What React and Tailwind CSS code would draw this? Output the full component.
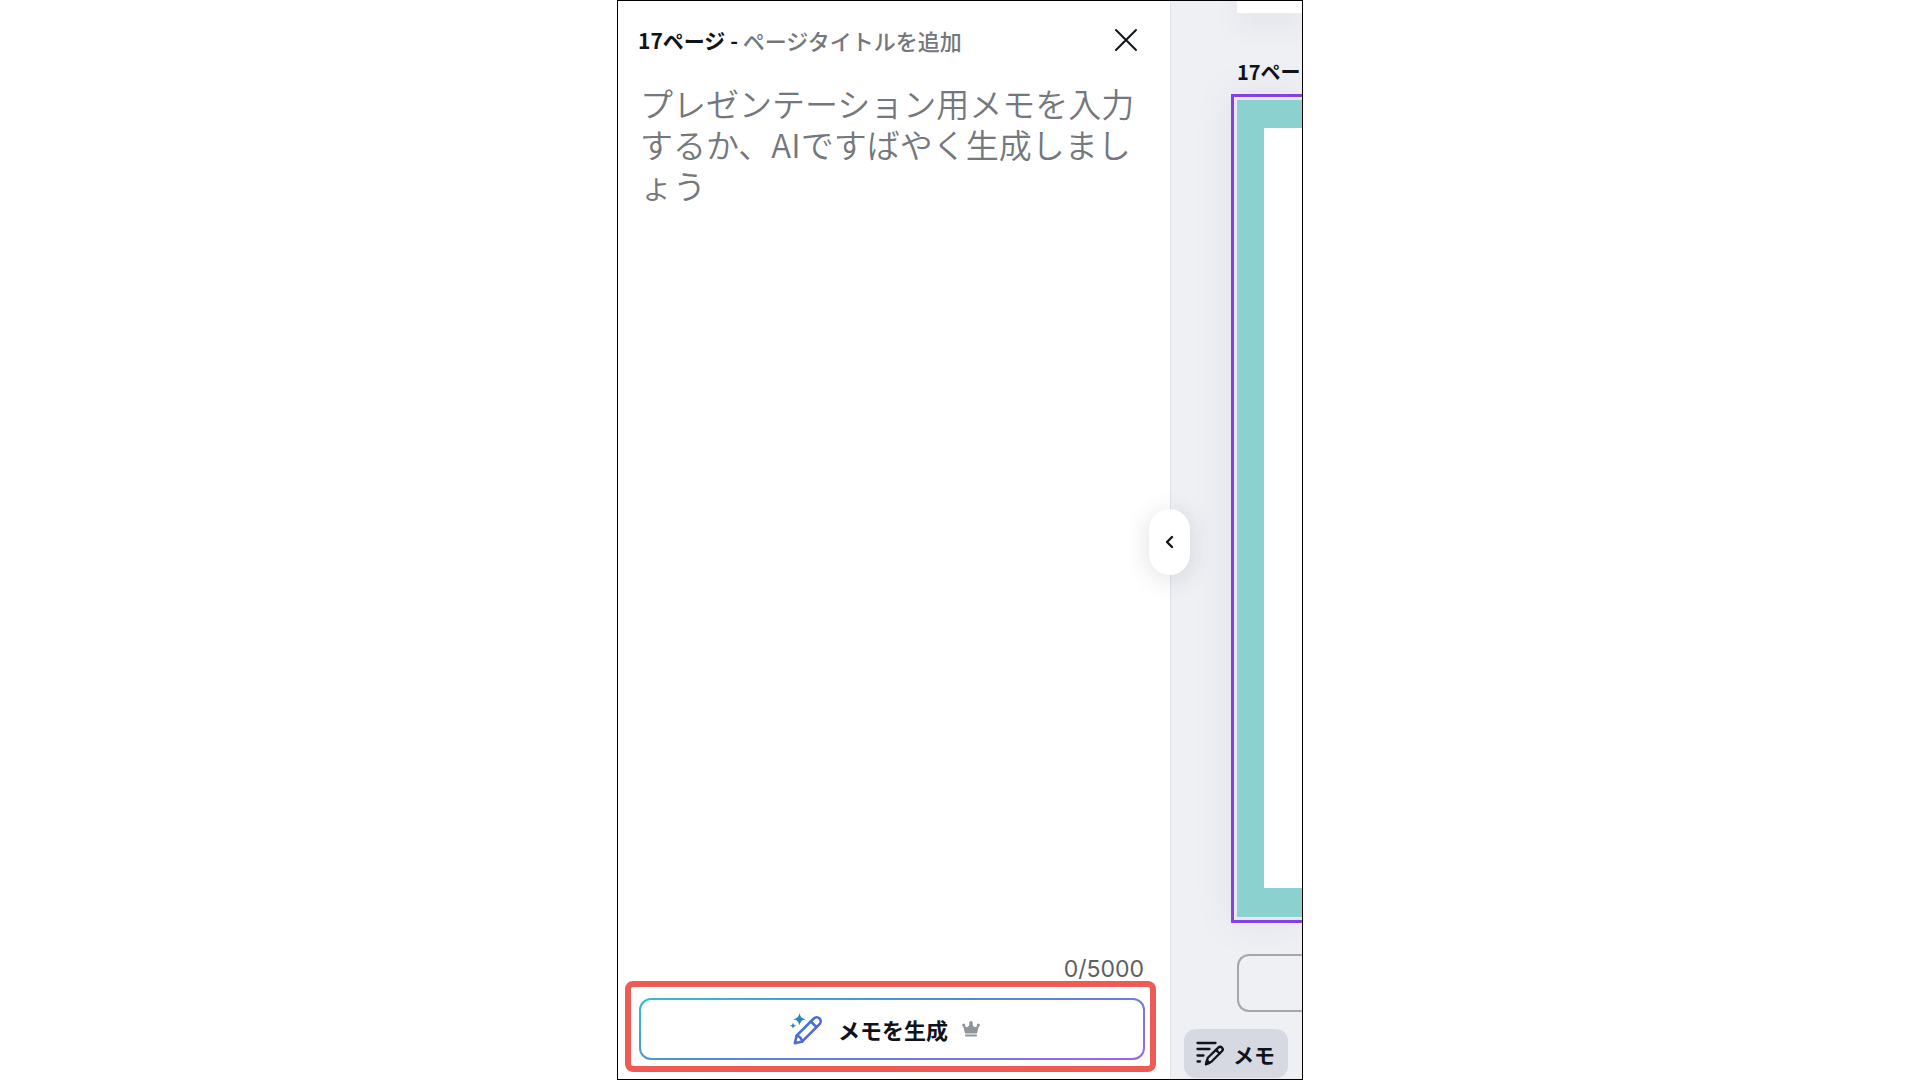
import React, { useState } from "react";

const MAX_LENGTH = 5000;

function MagicPencilIcon() {
  return (
    <svg width="32" height="32" viewBox="0 0 32 32" fill="none" aria-hidden="true">
      <defs>
        <linearGradient id="magic" x1="0" y1="0" x2="32" y2="32" gradientUnits="userSpaceOnUse">
          <stop offset="0.15" stopColor="#1f92b4" />
          <stop offset="0.5" stopColor="#4a6fd4" />
          <stop offset="1" stopColor="#6a4fe0" />
        </linearGradient>
      </defs>
      <path d="M9.500 0c1 4.200 2.100 5.300 6.300 6.300-4.200 1-5.300 2.100-6.300 6.300-1-4.200-2.100-5.300-6.300-6.300 4.200-1 5.300-2.100 6.300-6.300z" fill="#2488b4" />
      <path d="M3 9.500c.5 2.200 1 2.700 3.200 3.200-2.200.5-2.700 1-3.200 3.200-.5-2.200-1-2.700-3.200-3.200 2.200-.5 2.700-1 3.200-3.200z" fill="#2488b4" />
      <g stroke="url(#magic)" strokeWidth="2.6" strokeLinejoin="round" strokeLinecap="round">
        <path d="M4.800 30.300l1.800-7.600L23.800 5.500a4 4 0 0 1 5.700 5.700L12.300 28.400z" />
        <path d="M20.800 8.500l5.700 5.700" />
        <path d="M6.600 22.700c2.800.6 5 2.700 5.700 5.700" />
      </g>
    </svg>
  );
}

function CrownIcon() {
  return (
    <svg width="18" height="16" viewBox="0 0 18 16" fill="#8f959b" aria-hidden="true">
      <circle cx="1.700" cy="4" r="1.600" />
      <circle cx="9" cy="1.900" r="1.900" />
      <circle cx="16.300" cy="4" r="1.600" />
      <path d="M1 4.500l2 7.900h12l2-7.900-1.500-.2c-1.200 2.700-3.900 2.500-5.100-1.300L10 2.500H8L7.600 3C6.400 6.800 3.700 7 2.500 4.300z" />
      <rect x="3" y="13.400" width="12" height="2.200" rx="0.800" />
    </svg>
  );
}

function NotesIcon() {
  return (
    <svg width="28" height="25" viewBox="0 0 28 25" fill="none" stroke="#10131a" strokeWidth="2.3" strokeLinecap="round" strokeLinejoin="round" aria-hidden="true">
      <path d="M1.500 2h18M1.500 8h12M1.500 14.500h6M1.500 20.500h2.500" />
      <path d="M10 23.200l1.800-6.400L22.300 6.600a2.500 2.500 0 0 1 3.600 3.600L15.400 20.700z" />
      <path d="M20 8.900l3.600 3.600" />
      <path d="M10 23.200l1-3.700 2.400 2.400z" fill="#10131a" />
    </svg>
  );
}

function NotesPanel() {
  const [title, setTitle] = useState("");
  const [notes, setNotes] = useState("");

  return (
    <section className="flex-1 min-w-0 flex flex-col bg-white">
      <header className="flex items-center h-[78px] pl-5 pr-7">
        <label htmlFor="page-title" className="text-[21px] leading-8 font-bold whitespace-pre">17ページ - </label>
        <input
          id="page-title"
          value={title}
          onChange={(e) => setTitle(e.target.value)}
          placeholder="ページタイトルを追加"
          className="flex-1 min-w-0 h-8 text-[22px] leading-8 font-medium outline-none placeholder:text-[#74777b]"
        />
        <button aria-label="閉じる" className="p-1">
          <svg width="24" height="24" viewBox="0 0 24 24" fill="none" stroke="#10131a" strokeWidth="2" strokeLinecap="round" aria-hidden="true">
            <path d="M2 2l20 20M22 2L2 22" />
          </svg>
        </button>
      </header>

      <textarea
        aria-label="メモ"
        value={notes}
        maxLength={MAX_LENGTH}
        onChange={(e) => setNotes(e.target.value)}
        placeholder="プレゼンテーション用メモを入力するか、AIですばやく生成しましょう"
        className="flex-1 resize-none outline-none pl-[22px] pr-8 pt-1 text-[33px] leading-[41px] font-[350] placeholder:text-[#74777b]"
      />
      <p className="pr-[26px] text-right text-[23px] leading-6 text-[#5c5f64] font-['Inter',sans-serif]">
        {notes.length}/{MAX_LENGTH}
      </p>

      <div className="ml-[7px] mr-[14px] mb-[7px] border-6 border-[#ee5b55] rounded-lg pl-2 pr-[5px] pt-[11px] pb-[6px]">
        <button className="flex items-center justify-center w-full h-[62px] pr-[14px] rounded-xl border-2 border-transparent text-[22px] leading-8 font-bold [background:linear-gradient(white,white)_padding-box,linear-gradient(165deg,#35bfc9,#5288d8_45%,#9a66ea)_border-box]">
          <MagicPencilIcon />
          <span className="ml-4 mr-[14px]">メモを生成</span>
          <CrownIcon />
        </button>
      </div>
    </section>
  );
}

function PageStrip() {
  return (
    <aside className="relative w-[132px] shrink-0 flex flex-col bg-[#eff0f4] border-l border-[#dfe0e6]">
      <div className="ml-[66px] h-3 bg-white shadow-[0_8px_30px_rgba(60,60,100,0.12)]" />
      <h2 className="ml-[66px] mt-[43px] mb-[6px] text-[20px] leading-8 font-bold whitespace-nowrap">17ペー</h2>
      <div className="flex-1 ml-[60px] border-3 border-r-0 border-[#8540e4] bg-[#ebe6f6] p-[3px] pr-0 shadow-[0_0_40px_rgba(60,60,100,0.08)]">
        <div className="h-full bg-[#8ad1cf] pl-[27px] pt-7 pb-[29px]">
          <div className="h-full bg-white" />
        </div>
      </div>
      <button aria-label="ページを追加" className="ml-[66px] mt-[31px] h-[58px] rounded-l-xl border-2 border-r-0 border-[#a4a7ac]" />
      <button className="flex items-center gap-[9px] ml-[13px] mt-[17px] mb-px h-[49px] w-[104px] pl-3 rounded-xl bg-[#d6d8e2] text-[21px] leading-8 font-bold whitespace-nowrap">
        <NotesIcon />
        メモ
      </button>

      <button
        aria-label="パネルを折りたたむ"
        className="absolute -left-[22px] top-[508px] w-[41px] h-[66px] rounded-full bg-white flex items-center justify-center shadow-[0_4px_24px_rgba(60,60,90,0.16)]"
      >
        <svg width="10" height="14" viewBox="0 0 10 14" fill="none" stroke="#10131a" strokeWidth="2.4" strokeLinecap="round" strokeLinejoin="round" aria-hidden="true">
          <path d="M7 2L2 7l5 5" />
        </svg>
      </button>
    </aside>
  );
}

function App() {
  return (
    <main lang="ja" className="h-screen flex justify-center bg-white text-[#10131a] font-['Noto_Sans_CJK_JP',sans-serif]">
      <div className="flex w-full max-w-[686px] border border-black overflow-hidden">
        <NotesPanel />
        <PageStrip />
      </div>
    </main>
  );
}

export default App;
